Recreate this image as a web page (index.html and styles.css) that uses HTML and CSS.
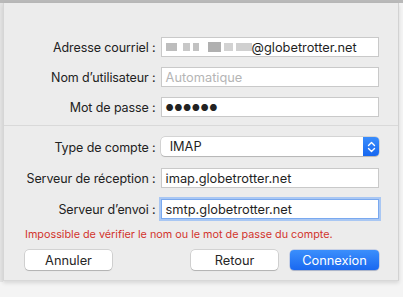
FILE: index.html
```html
<!DOCTYPE html>
<html lang="fr">
<head>
<meta charset="utf-8">
<link rel="stylesheet" href="styles.css">
</head>
<body>
<div class="topbar"></div>
<div class="frame">
  <div class="sheet">
    <div class="group first">
      <div class="row">
        <label class="lbl">Adresse courriel :</label>
        <div class="field"><span class="blur"><i class="b1"></i><i class="b2"></i><i class="b3"></i><i class="b4"></i><i class="b5"></i><i class="b6"></i></span>@globetrotter.net</div>
      </div>
      <div class="row">
        <label class="lbl">Nom d’utilisateur :</label>
        <div class="field placeholder">Automatique</div>
      </div>
      <div class="row">
        <label class="lbl">Mot de passe :</label>
        <div class="field dots">●●●●●●</div>
      </div>
    </div>
    <div class="sep"></div>
    <div class="group second">
      <div class="row">
        <label class="lbl">Type de compte :</label>
        <div class="popup"><span class="ptext">IMAP</span><span class="stepper"><svg width="9" height="12" viewBox="0 0 9 12"><path d="M1.5 4.5 L4.5 1.5 L7.5 4.5 M1.5 7.5 L4.5 10.5 L7.5 7.5" fill="none" stroke="#fff" stroke-width="1.4" stroke-linecap="round" stroke-linejoin="round"/></svg></span></div>
      </div>
      <div class="row">
        <label class="lbl">Serveur de réception :</label>
        <div class="field">imap.globetrotter.net</div>
      </div>
      <div class="row">
        <label class="lbl">Serveur d’envoi :</label>
        <div class="field focus">smtp.globetrotter.net</div>
      </div>
    </div>
    <p class="error">Impossible de vérifier le nom ou le mot de passe du compte.</p>
    <div class="buttons">
      <button class="btn">Annuler</button>
      <div class="right">
        <button class="btn">Retour</button>
        <button class="btn primary">Connexion</button>
      </div>
    </div>
  </div>
</div>
</body>
</html>
```
FILE: styles.css
```css
* { box-sizing: border-box; }
html, body { margin: 0; padding: 0; }
body {
  width: 403px;
  height: 297px;
  background: #f4f4f4;
  font-family: Inter, "Liberation Sans", sans-serif;
  font-size: 12.5px;
  color: #222;
  overflow: hidden;
}
.topbar {
  height: 3px;
  background: #b9b9b9;
}
.frame {
  padding-left: 3px;
  background: linear-gradient(to right, #e4e4e4 0, #e4e4e4 3px, transparent 3px);
  width: 400px;
  height: 279px;
}
.sheet {
  background: #ececec;
  border-left: 1px solid #d6d6d6;
  border-right: 1px solid #d2d2d2;
  border-bottom: 1px solid #d8d8d8;
  height: 278px;
  width: 396px;
  box-shadow: 0 2px 4px rgba(0,0,0,0.12);
  padding: 34px 19px 0 21px;
  display: flex;
  flex-direction: column;
}
.group { display: flex; flex-direction: column; gap: 10px; }
.row {
  display: flex;
  align-items: center;
  height: 20px;
}
.lbl {
  width: 136px;
  text-align: right;
  padding-right: 5px;
  white-space: nowrap;
  color: #222;
  letter-spacing: -0.1px;
}
.field {
  width: 219px;
  height: 20px;
  background: #fff;
  border: 1px solid #c9c9c9;
  padding: 0 4px;
  display: flex;
  align-items: center;
  color: #1f1f1f;
  font-size: 12.8px;
  white-space: nowrap;
}
.placeholder { color: #b5b5b5; }
.dots { font-size: 9px; letter-spacing: 0.5px; color: #222; }
.blur { display: inline-flex; align-items: center; width: 86px; height: 12px; }
.blur i { display: inline-block; height: 8px; background: #c8c8c8; }
.b1 { width: 12px; margin-right: 6px; background: #bdbdbd !important; }
.b2 { width: 7px; margin-right: 3px; }
.b3 { width: 6px; margin-right: 9px; background: #c2c2c2 !important; }
.b4 { width: 14px; height: 10px !important; margin-right: 3px; background: #b0b0b0 !important; }
.b5 { width: 9px; margin-right: 3px; background: #d2d2d2 !important; }
.b6 { width: 16px; background: #d0d0d0 !important; }
.sep {
  height: 1px;
  background: #d9d9d9;
  margin: 8px -19px 11px -21px;
}
.second { gap: 11px; }
.popup {
  width: 219px;
  height: 19px;
  margin-top: -1px;
  background: #fff;
  border-radius: 4px;
  box-shadow: 0 0 0 0.5px rgba(0,0,0,0.2), 0 1px 1px rgba(0,0,0,0.15);
  display: flex;
  align-items: center;
  justify-content: space-between;
}
.ptext { padding-left: 9px; font-size: 12.8px; color: #1f1f1f; }
.stepper {
  width: 16px;
  height: 19px;
  background: linear-gradient(#3a8dfc, #1767f0);
  border-radius: 0 4px 4px 0;
  display: flex;
  align-items: center;
  justify-content: center;
}
.focus {
  border: 1px solid #7aa9ef;
  box-shadow: 0 0 0 2px #a9c7f3;
}
.error {
  margin: 9px 0 0 0;
  color: #d2342c;
  font-size: 10.8px;
  white-space: nowrap;
}
.buttons {
  margin-top: 9px;
  display: flex;
  justify-content: space-between;
}
.right { display: flex; gap: 12px; }
.btn {
  font-family: Inter, "Liberation Sans", sans-serif;
  font-size: 12.8px;
  width: 87px;
  height: 20px;
  background: #fff;
  border: none;
  border-radius: 4px;
  box-shadow: 0 0 0 0.5px rgba(0,0,0,0.22), 0 1px 1px rgba(0,0,0,0.15);
  color: #262626;
  padding: 0;
}
.primary {
  width: 89px;
  background: linear-gradient(#3b8ffc, #1a68f0);
  color: #fff;
  box-shadow: 0 0 0 0.5px rgba(0,60,200,0.3), 0 1px 1px rgba(0,0,0,0.15);
}
```
